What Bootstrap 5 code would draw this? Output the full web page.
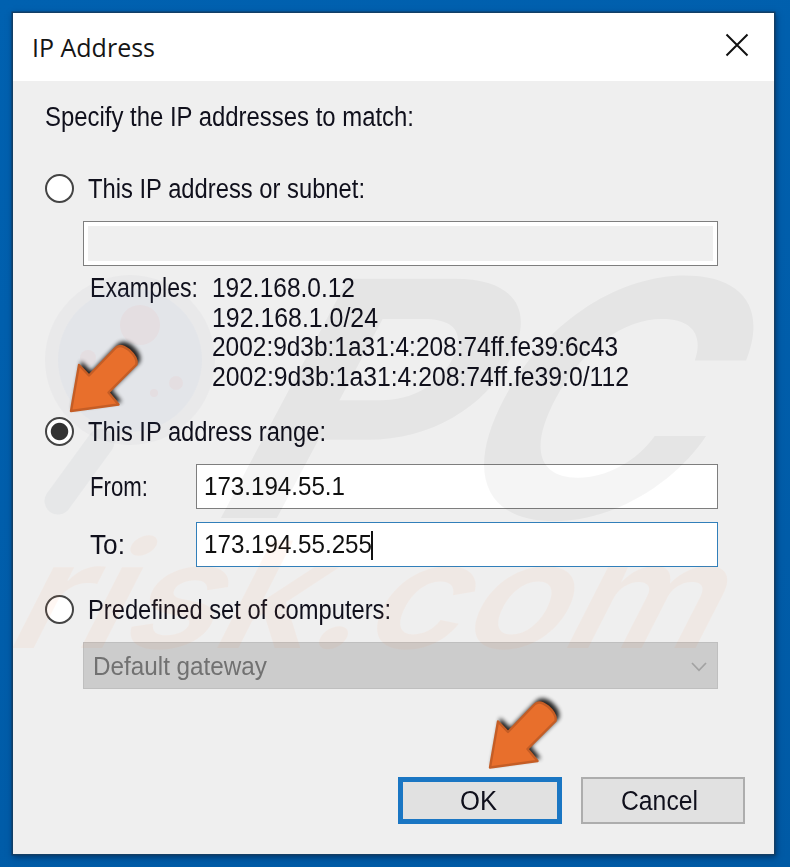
<!DOCTYPE html>
<html lang="en">
<head>
<meta charset="utf-8">
<title>IP Address</title>
<link href="https://cdn.jsdelivr.net/npm/bootstrap@5.3.0/dist/css/bootstrap.min.css" rel="stylesheet">
<style>
body{background:linear-gradient(160deg,#0061b0,#005aa5);height:867px;padding:13px 0 0 13px;overflow:hidden;font-family:"Liberation Sans",Arial,sans-serif;font-size:27px;line-height:29.4px;color:#10101c}
.dialog{width:761px;height:841px;background:#efefef;box-shadow:0 0 0 1.5px #123f66,1px 2px 6px 1px rgba(0,20,50,.55)}
.titlebar{height:68px;background:#fff;padding:0 25px 0 19px;color:#151515;font:25px "Open Sans","Noto Sans",sans-serif}
.fit{display:inline-block;white-space:nowrap;transform-origin:0 50%}
.pane{padding:22px 29px 0 32px}
.choice{height:30px;gap:14px}
.choice .form-check-input{width:29px;height:29px;margin:0;border:2px solid #444;background:#fff;opacity:1}
.choice .form-check-input:checked{background:radial-gradient(circle,#333 8.2px,#fff 9.2px)}
.choice .fit{padding-top:3px}
.inset{margin-left:38px;width:635px}
.field{height:45px;border:1px solid #7e7e7e;background:#fff;font-size:26px;padding:1px 0 0 7px;color:#101010;border-radius:0}
.off{background:#efefef;box-shadow:inset 0 0 0 4px #fff}
.active-field{border-color:#317fba}
.caret{width:2px;height:29px;background:#111;margin-left:-1px}
.name-col{width:113px;padding:2px 0 0 7px}
.combo{height:47px;background:#ccc;border:1px solid #bfbfbf;color:#717171;font-size:26px;padding:2px 10px 0 9px}
.cmd{width:164px;height:47px;border:2px solid #adadad;border-radius:0;background:#e1e1e1;font-size:27px;line-height:29px;color:#10101c}
.cmd .fit{padding:2px 0 0}
.cmd.default-cmd{border:5px solid #1a76c3}
.overlay-art{left:0;top:0;pointer-events:none;overflow:visible}
</style>
</head>
<body>
<main class="dialog">
  <header class="titlebar d-flex align-items-center justify-content-between">
    <span class="fit" data-fit="123">IP Address</span>
    <svg width="24" height="24" viewBox="0 0 24 24" style="margin-top:-5px"><path d="M1.500 1.500 22.500 22.500M22.500 1.500 1.500 22.500" stroke="#111" stroke-width="2"/></svg>
  </header>
  <section class="pane">
    <div><span class="fit" data-fit="369">Specify the IP addresses to match:</span></div>
    <label class="choice d-flex align-items-center" style="margin-top:41px"><input class="form-check-input" type="radio" name="m"><span class="fit" data-fit="277">This IP address or subnet:</span></label>
    <div class="inset field off" style="margin-top:18px"></div>
    <div class="inset d-flex" style="margin-top:8px">
      <div style="width:129px;padding-left:7px"><span class="fit" data-fit="108">Examples:</span></div>
      <div class="d-flex flex-column align-items-start">
        <span class="fit" data-fit="143">192.168.0.12</span>
        <span class="fit" data-fit="166">192.168.1.0/24</span>
        <span class="fit" data-fit="406">2002:9d3b:1a31:4:208:74ff.fe39:6c43</span>
        <span class="fit" data-fit="417">2002:9d3b:1a31:4:208:74ff.fe39:0/112</span>
      </div>
    </div>
    <label class="choice d-flex align-items-center" style="margin-top:24px"><input class="form-check-input" type="radio" name="m" checked><span class="fit" data-fit="238">This IP address range:</span></label>
    <div class="inset d-flex align-items-center" style="margin-top:18px">
      <div class="name-col"><span class="fit" data-fit="58">From:</span></div>
      <div class="field flex-grow-1 d-flex align-items-center"><span class="fit" data-fit="141">173.194.55.1</span></div>
    </div>
    <div class="inset d-flex align-items-center" style="margin-top:13px">
      <div class="name-col"><span class="fit" data-fit="35">To:</span></div>
      <div class="field active-field flex-grow-1 d-flex align-items-center"><span class="fit" data-fit="168">173.194.55.255</span><i class="caret"></i></div>
    </div>
    <label class="choice d-flex align-items-center" style="margin-top:27px"><input class="form-check-input" type="radio" name="m"><span class="fit" data-fit="303">Predefined set of computers:</span></label>
    <div class="inset combo d-flex align-items-center justify-content-between" style="margin-top:18px">
      <span class="fit" data-fit="174">Default gateway</span>
      <svg width="16" height="10" viewBox="0 0 16 10"><path d="M1 1 8 8.300 15 1" fill="none" stroke="#a2a2a2" stroke-width="1.700"/></svg>
    </div>
    <div class="d-flex justify-content-end" style="margin-top:88px;gap:19px">
      <button class="btn cmd default-cmd p-0 pe-1"><span class="fit" data-fit="37">OK</span></button>
      <button class="btn cmd p-0 pe-2"><span class="fit" data-fit="77">Cancel</span></button>
    </div>
  </section>
</main>
<svg class="overlay-art position-absolute" width="790" height="867" viewBox="0 0 790 867">
  <defs>
    <filter id="soft" x="-40%" y="-40%" width="180%" height="180%"><feGaussianBlur stdDeviation="2.2"/></filter>
    <g id="pointer">
      <path d="M70 412 78.500 364 89 374 115 347Q121 342 130 348.500 140 357 137.500 365L109.500 392.500 119.500 405Z" fill="#000" opacity=".85" transform="translate(2.500 -3)" filter="url(#soft)"/>
      <path d="M71 411 79 365 89 375.500 115.500 348Q120 343 129 350 138 358 136.500 364.500L108.500 392.500 118.500 404.500Z" fill="#e86f2c" stroke="#c55d25" stroke-width="2.400" stroke-linejoin="round"/>
    </g>
  </defs>
  <g fill="#000" opacity=".034" font-family="Inter,sans-serif" font-weight="700" font-size="329">
    <text transform="translate(222 518) skewX(-28)" x="-26" textLength="244" lengthAdjust="spacingAndGlyphs">P</text>
    <text transform="translate(445 518) skewX(-28)" x="-20" textLength="252" lengthAdjust="spacingAndGlyphs">C</text>
  </g>
  <text transform="translate(15 648) skewX(-27)" x="-14" fill="#ff7a30" opacity=".05" font-family="Inter,sans-serif" font-weight="600" font-size="148" textLength="706" lengthAdjust="spacingAndGlyphs">risk.com</text>
  <g>
    <path d="M101 442 58 501" stroke="#50607a" stroke-opacity=".05" stroke-width="27" stroke-linecap="round"/>
    <circle cx="130" cy="360" r="85" fill="#506070" fill-opacity=".035"/>
    <circle cx="130" cy="360" r="72" fill="#5a90e0" fill-opacity=".035"/>
    <g fill="#ff5040" opacity=".045"><circle cx="140" cy="325" r="20"/><circle cx="176" cy="383" r="7"/><circle cx="154" cy="393" r="4"/><circle cx="88" cy="358" r="8"/></g>
  </g>
  <use href="#pointer"/>
  <use href="#pointer" x="419" y="356.500"/>
</svg>
<script src="https://cdn.jsdelivr.net/npm/bootstrap@5.3.0/dist/js/bootstrap.bundle.min.js"></script>
<script>
// Condense each label to its dialog width, keeping the layout box in step.
document.querySelectorAll('[data-fit]').forEach(function (el) {
  var natural = el.getBoundingClientRect().width, wanted = +el.dataset.fit;
  el.style.transform = 'scaleX(' + wanted / natural + ')';
  el.style.marginRight = (wanted - natural) + 'px';
});
</script>
</body>
</html>
